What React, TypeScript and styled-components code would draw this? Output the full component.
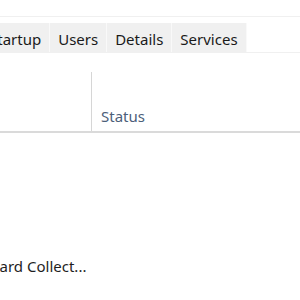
import React from 'react';
import styled, { createGlobalStyle } from 'styled-components';

const GlobalStyle = createGlobalStyle`
  html, body {
    margin: 0;
    padding: 0;
    background: #ffffff;
  }
  body {
    font-family: 'Segoe UI', 'Noto Sans', 'Open Sans', sans-serif;
    overflow: hidden;
  }
`;

const Window = styled.div`
  width: 300px;
  height: 300px;
  overflow: hidden;
  background: #ffffff;
  display: flex;
  flex-direction: column;
`;

const MenuStrip = styled.div`
  height: 16px;
  border-bottom: 1px solid #f0f0f0;
`;

const TabBar = styled.div`
  display: flex;
  margin-top: 6px;
  border-bottom: 1px solid #f0f0f0;
  height: 29px;
`;

const TabStrip = styled.div`
  display: flex;
  margin-left: -19px;
`;

const Tab = styled.div`
  display: flex;
  align-items: center;
  padding: 2px 8px 0;
  background: #f0f0f0;
  border-right: 1px solid #f9f9f9;
  font-size: 15px;
  color: #1a1a1a;
  white-space: nowrap;
`;

const HeaderRow = styled.div`
  display: flex;
  height: 78px;
  border-bottom: 2px solid #dadada;
`;

const NameHeader = styled.div`
  width: 91px;
  flex-shrink: 0;
`;

const Divider = styled.div`
  width: 1px;
  margin-top: 19px;
  background: #d6d6d6;
`;

const StatusHeader = styled.div`
  display: flex;
  align-items: flex-end;
  padding: 0 0 5px 9px;
  font-size: 15px;
  color: #4c607a;
`;

const Body = styled.div`
  flex: 1;
  display: flex;
  flex-direction: column;
  padding-top: 122px;
`;

const Row = styled.div`
  display: flex;
  height: 22px;
  align-items: center;
`;

const NameCell = styled.div`
  margin-left: -41px;
  font-size: 15px;
  color: #1e1e1e;
  white-space: nowrap;
`;

const tabs = ['Startup', 'Users', 'Details', 'Services'];

const App: React.FC = () => {
  return (
    <>
      <GlobalStyle />
      <Window>
        <MenuStrip />
        <TabBar>
          <TabStrip>
            {tabs.map((t) => (
              <Tab key={t}>{t}</Tab>
            ))}
          </TabStrip>
        </TabBar>
        <HeaderRow>
          <NameHeader />
          <Divider />
          <StatusHeader>Status</StatusHeader>
        </HeaderRow>
        <Body>
          <Row>
            <NameCell>Standard Collect...</NameCell>
          </Row>
        </Body>
      </Window>
    </>
  );
};

export default App;
